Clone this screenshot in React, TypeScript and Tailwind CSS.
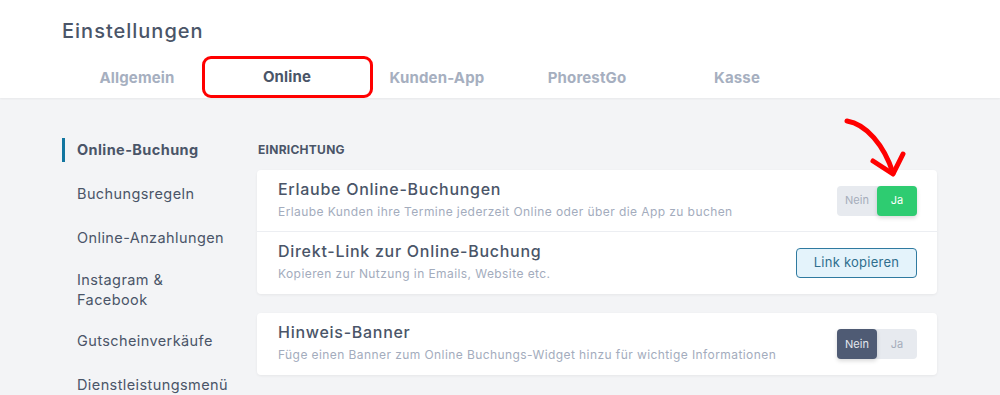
import React from "react";

const font = { fontFamily: "Inter, 'Open Sans', sans-serif" };

function Toggle({ on }: { on: boolean }) {
  return (
    <div className="flex h-[30px] w-[80px] rounded-[4px] bg-[#e7eaef] text-[11px]">
      <div
        className={
          on
            ? "flex w-[40px] items-center justify-center text-[#a5adbb]"
            : "flex w-[40px] items-center justify-center rounded-[4px] bg-[#4f5b74] text-[#e4e8ee] shadow-[0_2px_4px_rgba(0,0,0,0.15)]"
        }
      >
        Nein
      </div>
      <div
        className={
          on
            ? "flex w-[40px] items-center justify-center rounded-[4px] bg-[#2ecc71] text-white shadow-[0_2px_4px_rgba(0,0,0,0.15)]"
            : "flex w-[40px] items-center justify-center text-[#a5adbb]"
        }
      >
        Ja
      </div>
    </div>
  );
}

function Row({
  title,
  sub,
  right,
  border,
}: {
  title: string;
  sub: string;
  right: React.ReactNode;
  border?: boolean;
}) {
  return (
    <div
      className={
        "flex h-[62px] items-center justify-between pl-[21px] pr-[20px]" +
        (border ? " border-b border-[#eceef2]" : "")
      }
    >
      <div className="flex flex-col self-start pt-[9px]">
        <div className="text-[16px] font-medium leading-[20px] tracking-[0.045em] text-[#4a5568]">{title}</div>
        <div className="mt-[5px] text-[12px] leading-[16px] tracking-[0.035em] text-[#a3acbd]">{sub}</div>
      </div>
      {right}
    </div>
  );
}

export default function App() {
  return (
    <div className="relative h-[395px] w-[1000px] overflow-hidden bg-[#f3f4f6]" style={font}>
      {/* header */}
      <div className="h-[98px] bg-white shadow-[0_1px_2px_rgba(0,0,0,0.05)]">
        <div className="pl-[62px] pt-[18px] text-[20px] font-medium leading-[26px] tracking-[0.05em] text-[#4a5568]">
          Einstellungen
        </div>
        <div className="mt-[14px] flex pl-[62px]">
          {["Allgemein", "Online", "Kunden-App", "PhorestGo", "Kasse"].map((t) => (
            <div
              key={t}
              className={
                "flex h-[40px] w-[150px] items-center justify-center text-[15px] font-bold tracking-[0.01em] " +
                (t === "Online"
                  ? "border-b-2 border-[#2d4a66] text-[#4a5568]"
                  : "text-[#a6afc0]")
              }
            >
              {t}
            </div>
          ))}
        </div>
      </div>

      {/* body */}
      <div className="flex pl-[62px] pt-[40px]">
        <div className="w-[195px] text-[14.5px] leading-[20px] tracking-[0.028em] text-[#4a5568]">
          <div className="flex h-[24px] items-center border-l-[3px] border-[#1276a0] pl-[12px] font-bold">
            Online-Buchung
          </div>
          <div className="flex flex-col pl-[15px]">
            <div className="mt-[22px]">Buchungsregeln</div>
            <div className="mt-[24px]">Online-Anzahlungen</div>
            <div className="mt-[22px]">
              Instagram &amp;
              <br />
              Facebook
            </div>
            <div className="mt-[21px]">Gutscheinverkäufe</div>
            <div className="mt-[24px]">Dienstleistungsmenü</div>
          </div>
        </div>

        <div className="w-[680px]">
          <div className="h-[24px] pl-[1px] text-[12px] font-bold uppercase leading-[24px] tracking-[0.023em] text-[#4a5568]">
            Einrichtung
          </div>
          <div className="mt-[8px] rounded-[4px] bg-white shadow-[0_1px_3px_rgba(0,0,0,0.06)]">
            <Row
              title="Erlaube Online-Buchungen"
              sub="Erlaube Kunden ihre Termine jederzeit Online oder über die App zu buchen"
              right={<Toggle on />}
              border
            />
            <Row
              title="Direkt-Link zur Online-Buchung"
              sub="Kopieren zur Nutzung in Emails, Website etc."
              right={
                <button className="h-[30px] w-[121px] rounded-[4px] border border-[#2f7aa0] bg-[#e4f3fb] text-[13px] tracking-[0.02em] text-[#2f6e8e]">
                  Link kopieren
                </button>
              }
            />
          </div>
          <div className="mt-[19px] rounded-[4px] bg-white shadow-[0_1px_3px_rgba(0,0,0,0.06)]">
            <Row
              title="Hinweis-Banner"
              sub="Füge einen Banner zum Online Buchungs-Widget hinzu für wichtige Informationen"
              right={<Toggle on={false} />}
            />
          </div>
        </div>
      </div>

      {/* annotations */}
      <div className="pointer-events-none absolute left-[202px] top-[56px] h-[42px] w-[171px] rounded-[9px] border-[3px] border-[#ff0000]" />
      <svg className="pointer-events-none absolute left-0 top-0" width="1000" height="395">
        <path d="M847 121 C 866 124, 884 145, 893 173" fill="none" stroke="#ff0000" strokeWidth="5" strokeLinecap="round" />
        <path d="M873 161 L893 174 L903 154" fill="none" stroke="#ff0000" strokeWidth="5" strokeLinecap="round" strokeLinejoin="round" />
      </svg>
    </div>
  );
}
